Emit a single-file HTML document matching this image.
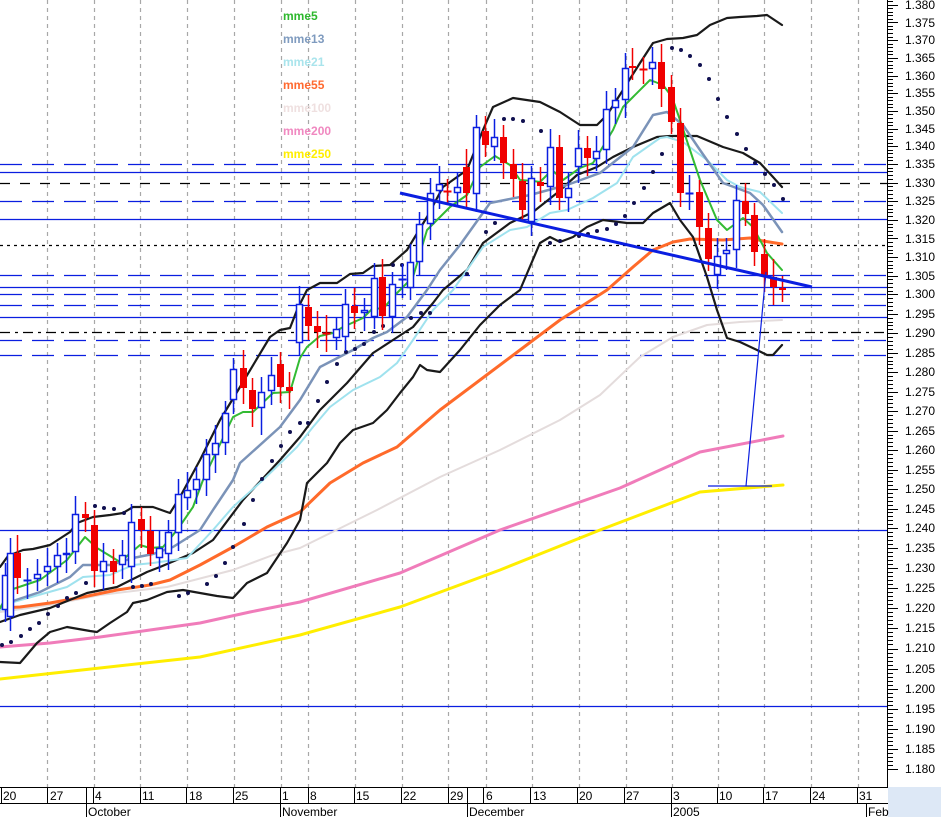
<!DOCTYPE html>
<html><head><meta charset="utf-8"><style>
html,body{margin:0;padding:0;background:#fff;}
svg{display:block;font-family:"Liberation Sans",Arial,sans-serif;}
</style></head><body>
<svg id="s" width="941" height="817" viewBox="0 0 941 817" xmlns="http://www.w3.org/2000/svg">
<rect x="0" y="0" width="941" height="817" fill="#fff"/>
<rect x="888" y="787" width="53" height="30" fill="#dde8f6"/>
<g id="grid"></g>
<g id="hl"></g>
<g id="ind" fill="none" stroke-linejoin="round" stroke-linecap="round"></g>
<g id="sar" fill="#101050"></g>
<g id="cnd"></g>
<g id="tl">
<line x1="400" y1="193" x2="812" y2="287" stroke="#0a1ee0" stroke-width="3"/>
<line x1="766" y1="272" x2="746" y2="486" stroke="#0a1ee0" stroke-width="1.2"/>
<line x1="708" y1="486" x2="772" y2="486" stroke="#0a1ee0" stroke-width="1.2"/>
</g>
<g font-weight="bold" font-size="12">
<text x="283" y="20" fill="#2eb82e">mme5</text>
<text x="283" y="43" fill="#7f9bbf">mme13</text>
<text x="283" y="66" fill="#a9e4ec">mme21</text>
<text x="283" y="89" fill="#ff6a30">mme55</text>
<text x="283" y="112" fill="#efe0e0">mme100</text>
<text x="283" y="135" fill="#f088c0">mme200</text>
<text x="283" y="158" fill="#ffee00">mme250</text>
</g>
<g id="axis" stroke="#000" stroke-width="1"></g>
<g font-size="12" fill="#000">
<text x="905" y="9">1.380</text><text x="905" y="27">1.375</text><text x="905" y="44">1.370</text><text x="905" y="62">1.365</text><text x="905" y="80">1.360</text><text x="905" y="97">1.355</text><text x="905" y="115">1.350</text><text x="905" y="133">1.345</text><text x="905" y="150">1.340</text><text x="905" y="168">1.335</text><text x="905" y="187">1.330</text><text x="905" y="205">1.325</text><text x="905" y="224">1.320</text><text x="905" y="243">1.315</text><text x="905" y="261">1.310</text><text x="905" y="280">1.305</text><text x="905" y="298">1.300</text><text x="905" y="318">1.295</text><text x="905" y="337">1.290</text><text x="905" y="357">1.285</text><text x="905" y="376">1.280</text><text x="905" y="396">1.275</text><text x="905" y="415">1.270</text><text x="905" y="435">1.265</text><text x="905" y="454">1.260</text><text x="905" y="474">1.255</text><text x="905" y="493">1.250</text><text x="905" y="513">1.245</text><text x="905" y="532">1.240</text><text x="905" y="552">1.235</text><text x="905" y="572">1.230</text><text x="905" y="592">1.225</text><text x="905" y="612">1.220</text><text x="905" y="632">1.215</text><text x="905" y="652">1.210</text><text x="905" y="673">1.205</text><text x="905" y="693">1.200</text><text x="905" y="713">1.195</text><text x="905" y="733">1.190</text><text x="905" y="753">1.185</text><text x="905" y="773">1.180</text>
</g>
<g font-size="12" fill="#000">
<text x="3" y="800">20</text><text x="50" y="800">27</text><text x="95" y="800">4</text><text x="142" y="800">11</text><text x="189" y="800">18</text><text x="235" y="800">25</text><text x="282" y="800">1</text><text x="310" y="800">8</text><text x="356" y="800">15</text><text x="403" y="800">22</text><text x="450" y="800">29</text><text x="486" y="800">6</text><text x="533" y="800">13</text><text x="579" y="800">20</text><text x="626" y="800">27</text><text x="673" y="800">3</text><text x="719" y="800">10</text><text x="765" y="800">17</text><text x="812" y="800">24</text><text x="859" y="800">31</text>
<text x="88" y="816">October</text><text x="282" y="816">November</text><text x="469" y="816">December</text><text x="673" y="816">2005</text><text x="868" y="816">Feb</text>
</g>
</svg>
<script>
var NS="http://www.w3.org/2000/svg";
function el(g,t,a){var e=document.createElementNS(NS,t);for(var k in a)e.setAttribute(k,a[k]);document.getElementById(g).appendChild(e);return e;}
[47,94,140,187,234,281,308,355,402,448,486,532,579,626,672,718,764,811,858].forEach(function(x){el("grid","line",{x1:x+0.5,y1:0,x2:x+0.5,y2:787,stroke:"#a8a8a8","stroke-width":1.2,"stroke-dasharray":"4,4"});});
var B="#0a1ee0",K="#000";
[[164,B,"22,10"],[172,B,""],[183,K,"10,10"],[201,B,"22,10"],[219,B,""],[245,K,"3,4"],[275,B,"22,10"],[287,B,""],[294,B,"22,10"],[305,B,"22,10"],[317,B,""],[332,K,"10,5,3,5"],[340,B,"22,10"],[355,B,"22,10"],[530,B,""],[706,B,""]].forEach(function(h){var a={x1:0,y1:h[0]+0.5,x2:887,y2:h[0]+0.5,stroke:h[1],"stroke-width":1.2};if(h[2])a["stroke-dasharray"]=h[2];el("hl","line",a);});
function pl(pts,c,w,d){var a={points:pts.map(function(p){return p.join(",")}).join(" "),stroke:c,"stroke-width":w};if(d)a["stroke-dasharray"]=d;el("ind","polyline",a);}
pl([[0,679],[100,668],[200,657],[300,635],[400,607],[500,570],[600,530],[700,492],[783,485]],"#ffee00",3);
pl([[0,647],[50,643],[100,637],[150,630],[200,623],[250,612],[300,602],[400,573],[500,530],[620,488],[700,452],[783,436]],"#f07cba",3);
pl([[0,612],[50,605],[100,595],[167,587],[233,570],[273,555],[300,548],[377,510],[440,477],[500,450],[560,420],[600,395],[640,357],[673,337],[707,325],[740,322],[782,320]],"#e4dcdc",2);
pl([[0,608],[20,607],[50,603],[83,597],[117,590],[150,585],[170,580],[200,565],[233,547],[267,527],[300,512],[330,483],[363,463],[397,447],[440,410],[480,380],[520,350],[560,320],[607,290],[633,267],[653,250],[673,242],[690,239],[723,240],[750,238],[763,241],[782,244]],"#ff6a2a",3);
pl([[0,662],[20,663],[37,643],[50,632],[67,627],[90,631],[97,632],[110,623],[127,612],[133,603],[147,600],[167,592],[183,590],[200,593],[217,596],[233,598],[247,583],[267,573],[287,543],[300,520],[307,483],[327,463],[340,443],[353,430],[373,423],[387,410],[400,393],[413,377],[420,365],[427,370],[440,372],[460,350],[480,325],[500,305],[520,290],[540,243],[550,237],[560,242],[573,237],[587,227],[603,220],[627,223],[643,223],[653,213],[670,203],[680,220],[693,237],[707,277],[717,310],[727,338],[740,342],[757,350],[767,355],[773,355],[782,345]],"#1a1a1a",2.2);
pl([[0,567],[8,556],[23,550],[33,549],[50,545],[70,532],[77,523],[93,517],[110,515],[123,513],[133,507],[153,507],[167,512],[170,513],[180,497],[200,460],[220,420],[240,387],[270,337],[280,330],[290,328],[297,310],[307,290],[320,283],[337,283],[350,274],[363,273],[373,266],[390,265],[407,250],[427,217],[443,187],[467,170],[483,130],[493,107],[513,98],[540,102],[560,112],[580,125],[597,125],[607,115],[623,90],[640,63],[653,43],[667,39],[683,38],[697,35],[710,25],[727,18],[740,17],[757,16],[767,15],[782,25]],"#1a1a1a",2.2);
pl([[0,622],[20,615],[50,608],[87,593],[117,587],[147,572],[160,567],[193,553],[213,540],[243,500],[280,460],[300,437],[320,410],[347,383],[373,353],[393,340],[413,327],[433,303],[443,290],[467,270],[483,243],[510,223],[533,212],[557,193],[577,175],[597,167],[613,157],[633,147],[657,137],[670,136],[697,136],[723,147],[743,153],[760,163],[773,177],[782,187]],"#1a1a1a",2.2);
pl([[0,610],[10,603],[67,587],[83,577],[110,575],[133,565],[153,563],[187,558],[213,530],[233,507],[263,480],[297,447],[313,427],[330,407],[353,390],[380,377],[397,363],[413,340],[433,310],[453,290],[483,247],[510,230],[527,227],[550,213],[567,210],[593,198],[617,183],[633,157],[660,138],[667,137],[683,142],[707,160],[727,180],[740,187],[760,192],[782,213]],"#9fe2ee",2);
pl([[0,608],[10,602],[40,592],[70,577],[83,565],[110,565],[133,558],[153,554],[173,547],[200,530],[213,510],[233,480],[240,463],[280,427],[300,400],[320,367],[353,350],[373,338],[387,332],[407,317],[427,290],[440,270],[460,245],[490,203],[530,195],[567,185],[600,173],[633,147],[653,115],[667,112],[683,125],[700,150],[723,183],[750,193],[763,205],[782,232]],"#7b93b8",2.5);
pl([[0,608],[10,590],[40,580],[67,560],[85,537],[97,548],[120,562],[140,545],[150,548],[163,547],[173,535],[182,523],[193,507],[203,480],[233,417],[243,412],[253,412],[273,393],[290,392],[300,358],[307,347],[320,336],[333,333],[343,327],[363,318],[373,308],[383,309],[393,297],[413,277],[427,230],[450,207],[467,195],[480,167],[495,156],[510,165],[520,180],[533,181],[540,182],[552,170],[563,180],[580,168],[593,163],[613,130],[623,107],[633,97],[650,80],[663,85],[672,97],[680,120],[700,180],[717,220],[727,230],[743,218],[753,227],[767,253],[782,270]],"#33bb33",2);
[[2,645],[11,642],[21,636],[30,629],[39,623],[48,614],[58,606],[67,598],[76,593],[86,583],[95,506],[104,508],[114,509],[124,513],[133,587],[142,586],[151,584],[179,596],[188,593],[207,584],[216,576],[225,563],[233,547],[244,524],[253,500],[262,479],[272,461],[281,446],[290,432],[300,423],[308,423],[318,401],[327,382],[337,364],[346,352],[355,349],[364,344],[374,332],[383,326],[393,265],[402,265],[411,318],[421,313],[430,313],[467,274],[486,232],[495,223],[504,119],[513,119],[523,121],[541,131],[550,243],[560,241],[579,236],[588,234],[597,231],[607,229],[616,224],[625,216],[634,203],[644,188],[653,172],[662,154],[672,48],[681,50],[690,56],[700,65],[709,79],[718,99],[727,117],[737,134],[746,149],[755,163],[765,174],[774,185],[783,199]].forEach(function(p){el("sar","circle",{cx:p[0],cy:p[1],r:2});});
var C=[[5,575,610,'b'],[10,553,617,'b'],[17,553,578,'r'],[27,580,581,'b'],[37,574,579,'b'],[47,566,572,'b'],[57,555,567,'b'],[66,553,555,'b'],[75,514,552,'b'],[85,514,518,'r'],[94,525,571,'r'],[103,561,572,'b'],[113,561,572,'r'],[122,555,565,'b'],[131,522,567,'b'],[141,519,530,'r'],[150,531,554,'r'],[159,548,558,'b'],[168,532,554,'b'],[178,494,533,'b'],[187,490,498,'b'],[196,479,490,'b'],[206,454,480,'b'],[215,443,455,'b'],[225,413,443,'b'],[233,369,400,'b'],[243,368,388,'r'],[252,390,409,'r'],[261,392,408,'b'],[271,375,391,'b'],[280,364,387,'r'],[289,387,391,'r'],[299,304,343,'b'],[308,307,326,'r'],[317,326,332,'r'],[326,333,334,'r'],[336,329,338,'b'],[345,304,337,'b'],[354,306,313,'r'],[364,310,313,'b'],[374,278,317,'b'],[382,277,316,'r'],[392,284,317,'b'],[402,279,280,'b'],[410,262,288,'b'],[419,224,262,'b'],[430,193,224,'b'],[439,184,191,'b'],[447,191,192,'r'],[457,187,193,'b'],[466,167,193,'r'],[476,127,194,'b'],[485,131,145,'r'],[494,137,147,'b'],[503,137,163,'r'],[513,164,179,'r'],[522,181,210,'r'],[531,178,222,'b'],[540,182,186,'r'],[550,147,187,'b'],[559,147,198,'r'],[568,188,198,'b'],[578,148,167,'b'],[587,148,158,'r'],[596,151,159,'b'],[606,109,150,'b'],[615,100,108,'b'],[625,68,100,'b'],[632,66,68,'r'],[643,69,70,'r'],[652,62,69,'b'],[661,62,89,'r'],[671,87,122,'r'],[680,123,193,'r'],[689,193,194,'b'],[699,192,227,'r'],[708,228,259,'r'],[717,256,275,'b'],[726,250,254,'b'],[736,200,250,'b'],[745,201,214,'r'],[754,215,252,'r'],[764,254,276,'r'],[773,277,287,'r'],[782,288,290,'r']];
C.forEach(function(c,i){var x=c[0],t=c[1],b=c[2],col=c[3]=='r'?'#f00000':'#0a1ee0';
 var hi=t-12-(i%3)*3,lo=b+12+(i%4)*2; if(x==261)lo=435; if(x==233)hi=358;
 el("cnd","line",{x1:x+0.5,y1:hi,x2:x+0.5,y2:lo,stroke:col,"stroke-width":1.5});
 if(b-t<2){el("cnd","line",{x1:x-3.5,y1:t+0.5,x2:x+4.5,y2:t+0.5,stroke:col,"stroke-width":2});}
 else if(c[3]=='r'){el("cnd","rect",{x:x-3,y:t,width:7,height:b-t,fill:col});}
 else{el("cnd","rect",{x:x-2.5,y:t+0.5,width:6,height:b-t-1,fill:"#fff",stroke:col,"stroke-width":1.5});}
});
el("axis","line",{x1:887.5,y1:0,x2:887.5,y2:787});
el("axis","line",{x1:0,y1:787.5,x2:888,y2:787.5});
el("axis","line",{x1:0,y1:803.5,x2:888,y2:803.5});
[1,47,86,93,140,186,233,280,308,354,401,448,467,483,530,577,624,671,717,763,810,857].forEach(function(x){el("axis","line",{x1:x+0.5,y1:788,x2:x+0.5,y2:803});});
[86,280,467,671,866].forEach(function(x){el("axis","line",{x1:x+0.5,y1:804,x2:x+0.5,y2:817});});
var A=[[1.380,4.7],[1.335,164],[1.300,294.3],[1.240,528],[1.180,769]];
function yp(p){for(var i=0;i<A.length-1;i++){if(p<=A[i][0]+1e-9&&p>=A[i+1][0]-1e-9){return A[i][1]+(A[i][0]-p)/(A[i][0]-A[i+1][0])*(A[i+1][1]-A[i][1]);}}return -10;}
for(var k=0;k<=210;k++){var p=1.380-k*0.001+0.002;var y=p>1.380?4.7-(p-1.380)/0.001*3.5:yp(p);if(p<1.176)y=769+(1.180-p)/0.001*4;
 if(y<0||y>787)continue;var maj=(Math.round(p*1000)%5==0);
 el("axis","line",{x1:888,y1:Math.round(y)+0.5,x2:maj?898:893,y2:Math.round(y)+0.5});}
</script>
</body></html>
